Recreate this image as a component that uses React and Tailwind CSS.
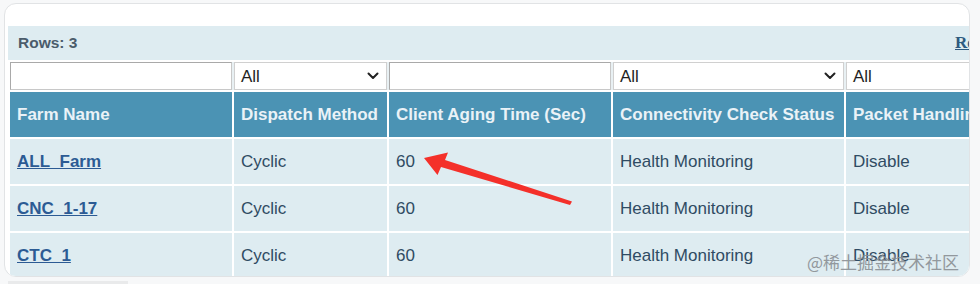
import React from "react";

const cols = ["w-[222px]", "w-[153px]", "w-[222px]", "w-[231px]", "w-[200px]"];

const headers = [
  "Farm Name",
  "Dispatch Method",
  "Client Aging Time (Sec)",
  "Connectivity Check Status",
  "Packet Handling",
];

const rows = [
  ["ALL_Farm", "Cyclic", "60", "Health Monitoring", "Disable"],
  ["CNC_1-17", "Cyclic", "60", "Health Monitoring", "Disable"],
  ["CTC_1", "Cyclic", "60", "Health Monitoring", "Disable"],
];

function Chevron() {
  return (
    <svg width="12" height="8" viewBox="0 0 12 8" className="shrink-0">
      <path d="M1.5 1.5 L6 6 L10.5 1.5" fill="none" stroke="#222" strokeWidth="2" strokeLinecap="round" strokeLinejoin="round" />
    </svg>
  );
}

function TextFilter({ w }) {
  return <div className={`${w} h-[28px] shrink-0 bg-white border border-[#a9a9a9] border-b-[#c8c8c8] border-r-[#c8c8c8]`} />;
}

function SelectFilter({ w }) {
  return (
    <div className={`${w} h-[28px] shrink-0 bg-white border border-[#d0d0d0] flex items-center pl-[6px] pr-[7px] text-[17px] text-[#1f1f1f]`}>
      <span className="flex-1 leading-none">All</span>
      <Chevron />
    </div>
  );
}

export default function App() {
  return (
    <div
      className="relative w-[980px] h-[284px] bg-[#f7f8f9] overflow-hidden pt-[3px] pl-[4px]"
      style={{ fontFamily: '"Liberation Sans", Arial, sans-serif' }}
    >
      <div className="w-[966px] h-[274px] rounded-[12px] border border-[#e1e3e5] bg-white overflow-hidden pt-[22px] pl-[3px]">
        {/* rows count bar */}
        <div className="w-[1100px] h-[34px] bg-[#deecf1] flex items-center pl-[10px]">
          <span className="w-[937px] shrink-0 text-[15.5px] font-bold text-[#4b5c6b]">Rows: 3</span>
          <a
            className="text-[17px] font-bold underline text-[#2e5a80]"
            style={{ fontFamily: '"Liberation Serif", "Times New Roman", serif' }}
          >
            Refresh
          </a>
        </div>

        {/* grid of filters, headers and data */}
        <div className="w-[1100px] bg-white pt-[2px] pl-[2px] flex flex-col gap-[2px]">
          <div className="flex gap-[2px] bg-[#e8f0f3]">
            <TextFilter w={cols[0]} />
            <SelectFilter w={cols[1]} />
            <TextFilter w={cols[2]} />
            <SelectFilter w={cols[3]} />
            <SelectFilter w={cols[4]} />
          </div>

          <div className="flex gap-[2px]">
            {headers.map((h, i) => (
              <div
                key={h}
                className={`${cols[i]} h-[45px] shrink-0 bg-[#4b93b4] flex items-center pl-[7px] text-[17px] font-bold text-[#eaf2f7] whitespace-nowrap overflow-hidden`}
              >
                {h}
              </div>
            ))}
          </div>

          {rows.map((r) => (
            <div key={r[0]} className="flex gap-[2px]">
              {r.map((c, i) => (
                <div
                  key={i}
                  className={`${cols[i]} h-[45px] shrink-0 bg-[#deecf1] flex items-center pl-[7px] text-[17px] whitespace-nowrap`}
                >
                  {i === 0 ? (
                    <a className="font-bold underline text-[#2c5b94]">{c}</a>
                  ) : (
                    <span className="text-[#2f4b63]">{c}</span>
                  )}
                </div>
              ))}
            </div>
          ))}
        </div>
      </div>

      {/* faint strip below the card */}
      <div className="absolute left-[8px] top-[281px] w-[120px] h-[3px] bg-[#e9eaeb]" />

      {/* red annotation arrow */}
      <svg className="absolute left-0 top-0 pointer-events-none" width="980" height="284" viewBox="0 0 980 284">
        <polygon
          points="424,158 448,152.5 445,160 572,201.5 570,205 441,167 437.5,175"
          fill="#f4302a"
        />
      </svg>

      {/* site watermark */}
      <div
        className="absolute left-[807px] top-[249px] text-[17px] text-[#8a8f94] opacity-90 whitespace-nowrap"
        style={{ fontFamily: '"Noto Sans CJK SC", "Liberation Sans", sans-serif' }}
      >
        @稀土掘金技术社区
      </div>
    </div>
  );
}
